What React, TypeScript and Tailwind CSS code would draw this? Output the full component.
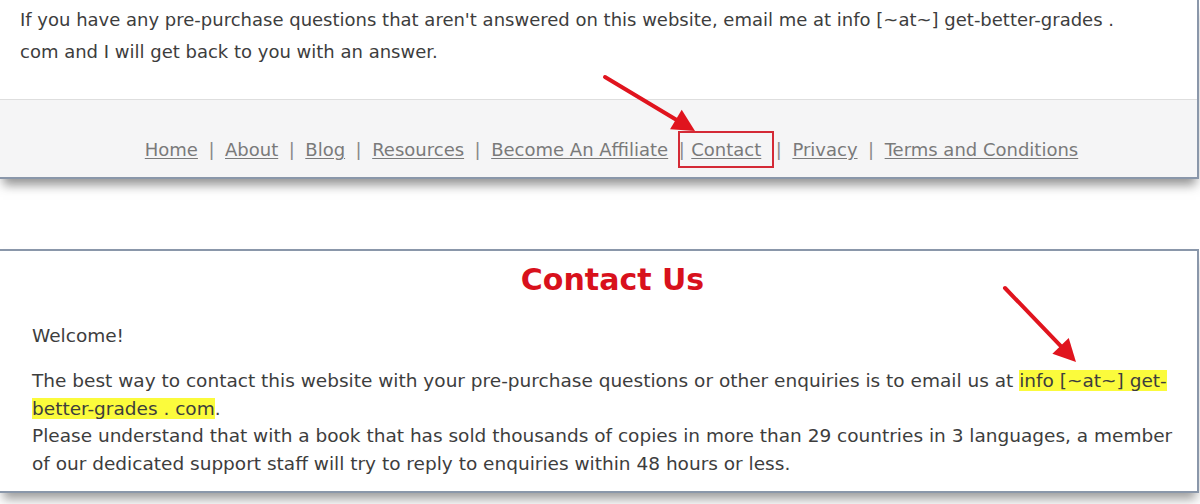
import React from "react";

const LINKS = ["Home", "About", "Blog", "Resources", "Become An Affiliate", "Contact", "Privacy", "Terms and Conditions"];

function Arrow({ x1, y1, x2, y2 }: { x1: number; y1: number; x2: number; y2: number }) {
  const a = Math.atan2(y2 - y1, x2 - x1);
  const len = 25;
  const w = 0.47;
  const p1 = [x2 - len * Math.cos(a - w), y2 - len * Math.sin(a - w)];
  const p2 = [x2 - len * Math.cos(a + w), y2 - len * Math.sin(a + w)];
  const bx = x2 - 16 * Math.cos(a);
  const by = y2 - 16 * Math.sin(a);
  return (
    <g>
      <line x1={x1} y1={y1} x2={bx} y2={by} stroke="#e0141e" strokeWidth={4} strokeLinecap="round" />
      <polygon points={`${x2},${y2} ${p1[0]},${p1[1]} ${p2[0]},${p2[1]}`} fill="#e0141e" />
    </g>
  );
}

export default function App() {
  return (
    <div className="relative w-[1200px] h-[504px] overflow-hidden bg-white text-[#3d3d3d]" style={{ fontFamily: '"DejaVu Sans", Verdana, sans-serif' }}>
      {/* top capture: page footer */}
      <div className="w-[1199px] border-r-2 border-b-2 border-[#8a97aa] bg-white shadow-[0_9px_10px_-3px_rgba(60,60,60,0.55)]">
        <div className="h-[99px] pl-[20px] pr-[60px] pt-[4px] text-[18px] leading-[32px]">
          If you have any pre-purchase questions that aren't answered on this website, email me at info [~at~] get-better-grades .
          com and I will get back to you with an answer.
        </div>
        <div className="h-[78px] border-t border-[#dedede] bg-[#f5f5f6] flex items-center justify-center pt-[22px] pl-[26px] text-[18px] text-[#7a7a7a]">
          {LINKS.map((l, i) => (
            <React.Fragment key={l}>
              {i > 0 && <span className="mx-[10.5px] text-[#8a8a8a]">|</span>}
              {l === "Contact" ? (
                <span className="border-2 border-[#d42a36] px-[11px] py-[3px] -ml-[17px] -mr-[9px]">
                  <a href="#" className="underline underline-offset-2">{l}</a>
                </span>
              ) : (
                <a href="#" className="underline underline-offset-2">{l}</a>
              )}
            </React.Fragment>
          ))}
        </div>
      </div>

      {/* bottom capture: contact page */}
      <div className="mt-[70px] w-[1199px] h-[244px] border-t-2 border-r-2 border-b-2 border-[#8a97aa] bg-white shadow-[0_9px_10px_-3px_rgba(60,60,60,0.5)] pl-[32px] pr-[14px]">
        <h1 className="ml-[10px] text-center text-[30px] font-bold text-[#d8111c] leading-[34px] pt-[12px]">Contact Us</h1>
        <p className="mt-[25px] text-[18.5px] leading-[28px]">Welcome!</p>
        <p className="mt-[17px] text-[18.5px] leading-[27.5px]">
          The best way to contact this website with your pre-purchase questions or other enquiries is to email us at{" "}
          <span className="bg-[#fbfb3c]">info [~at~] get-</span>
          <span className="bg-[#fbfb3c]">better-grades . com</span>.
          <br />
          Please understand that with a book that has sold thousands of copies in more than 29 countries in 3 languages, a member
          of our dedicated support staff will try to reply to enquiries within 48 hours or less.
        </p>
      </div>

      <svg className="absolute left-0 top-0 pointer-events-none" width={1200} height={504}>
        <Arrow x1={605} y1={77} x2={695} y2={131} />
        <Arrow x1={1005} y1={288} x2={1076} y2={362} />
      </svg>
    </div>
  );
}
